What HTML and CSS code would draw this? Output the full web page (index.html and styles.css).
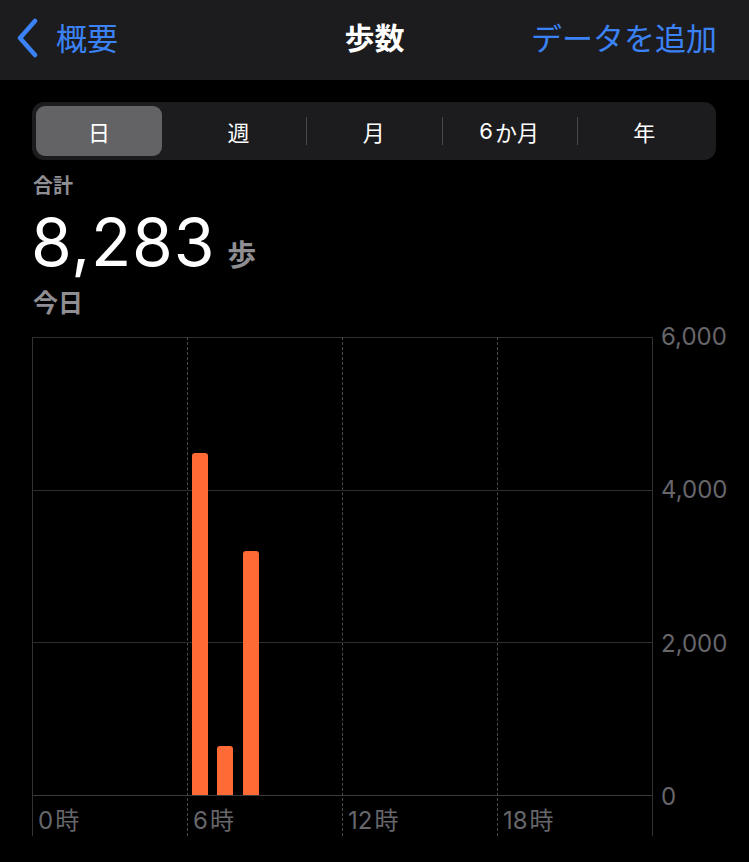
FILE: index.html
```html
<!DOCTYPE html>
<html lang="ja">
   <head>
      <meta charset="UTF-8">
      <meta name="viewport" content="width=device-width, initial-scale=1.0">
      <title>歩数</title>
      <link rel="stylesheet" href="styles.css">
   </head>
   <body>
      <header class="nav">
         <a class="nav-back">
            <svg width="26" height="40" viewBox="0 0 26 40"><path d="M21 3 L6 20 L21 37" fill="none" stroke="#3b82f6" stroke-width="4.5" stroke-linecap="round" stroke-linejoin="round"/></svg>
            <span>概要</span>
         </a>
         <div class="nav-title">歩数</div>
         <a class="nav-action">データを追加</a>
      </header>
      <div class="segments">
         <div class="segment active">日</div>
         <div class="segment">週</div>
         <div class="segment sep">月</div>
         <div class="segment sep">6<span class="kana">か月</span></div>
         <div class="segment sep">年</div>
      </div>
      <div class="summary">
         <div class="summary-label">合計</div>
         <div class="summary-value">8,283<span class="unit">歩</span></div>
         <div class="summary-date">今日</div>
      </div>
      <div class="chart">
         <div class="plot">
            <div class="quarter first">
               <div class="hours">
                  <div class="hour"></div><div class="hour"></div><div class="hour"></div>
                  <div class="hour"></div><div class="hour"></div><div class="hour"></div>
               </div>
               <div class="xlabel">0<span class="kana">時</span></div>
            </div>
            <div class="quarter">
               <div class="hours">
                  <div class="hour"><div class="bar" style="height: 342px"></div></div>
                  <div class="hour"><div class="bar" style="height: 49px"></div></div>
                  <div class="hour"><div class="bar" style="height: 244px"></div></div>
                  <div class="hour"></div><div class="hour"></div><div class="hour"></div>
               </div>
               <div class="xlabel">6<span class="kana">時</span></div>
            </div>
            <div class="quarter">
               <div class="hours">
                  <div class="hour"></div><div class="hour"></div><div class="hour"></div>
                  <div class="hour"></div><div class="hour"></div><div class="hour"></div>
               </div>
               <div class="xlabel">12<span class="kana">時</span></div>
            </div>
            <div class="quarter">
               <div class="hours">
                  <div class="hour"></div><div class="hour"></div><div class="hour"></div>
                  <div class="hour"></div><div class="hour"></div><div class="hour"></div>
               </div>
               <div class="xlabel">18<span class="kana">時</span></div>
            </div>
         </div>
         <div class="yaxis">
            <div class="ylabel">6,000</div>
            <div class="ylabel">4,000</div>
            <div class="ylabel">2,000</div>
            <div class="ylabel">0</div>
         </div>
      </div>
   </body>
</html>
```

FILE: styles.css
```css
* {
margin: 0;
padding: 0;
box-sizing: border-box;
}
body {
background: #000;
color: #fff;
font-family: "Inter", "Noto Sans CJK JP", sans-serif;
width: 749px;
height: 862px;
overflow: hidden;
}
.kana {
margin-left: 2px;
}
.nav {
display: grid;
grid-template-columns: 1fr auto 1fr;
align-items: center;
height: 80px;
background: #1c1c1e;
padding: 0 32px 8px 32px;
font-size: 31px;
font-family: "Noto Sans CJK JP", sans-serif;
}
.nav-back {
display: flex;
align-items: center;
gap: 16px;
margin-left: -18px;
color: #3b82f6;
}
.nav-back svg {
margin-top: 4px;
}
.nav-title {
font-size: 30px;
font-weight: 700;
}
.nav-action {
text-align: right;
color: #3b82f6;
}
.segments {
display: flex;
margin: 22px 33px 0 32px;
height: 58px;
padding: 4px;
background: #1c1c1e;
border-radius: 12px;
}
.segment {
flex: 1;
display: flex;
align-items: center;
justify-content: center;
font-size: 22px;
position: relative;
border-radius: 9px;
}
.segment.active {
background: #636366;
flex: 0 0 126px;
margin-right: 9px;
}
.segment.sep::before {
content: "";
position: absolute;
left: 0;
top: 11px;
bottom: 11px;
width: 1px;
background: #48484a;
}
.summary {
padding-left: 31px;
}
.summary-label {
margin-top: 12px;
padding-left: 2px;
font-size: 20px;
line-height: 26px;
font-weight: 700;
color: #8e8e93;
font-family: "Noto Sans CJK JP", sans-serif;
}
.summary-value {
margin-top: 11px;
font-size: 66px;
line-height: 66px;
font-weight: 400;
letter-spacing: 0.8px;
}
.unit {
margin-left: 12px;
font-size: 29px;
line-height: 0;
font-weight: 700;
color: #8e8e93;
letter-spacing: 0;
font-family: "Noto Sans CJK JP", sans-serif;
}
.summary-date {
margin-top: 11px;
padding-left: 2px;
font-size: 25px;
line-height: 30px;
font-weight: 700;
color: #8e8e93;
font-family: "Noto Sans CJK JP", sans-serif;
}
.chart {
display: flex;
margin: 21px 0 0 32px;
}
.plot {
display: flex;
width: 621px;
border-right: 1px solid #333336;
}
.quarter {
width: 155px;
border-left: 1px dashed #4a4a4d;
}
.quarter.first {
border-left: 1px solid #333336;
}
.hours {
display: flex;
height: 459px;
padding: 0 1px 0 0;
background-image: repeating-linear-gradient(to bottom, #2e2e30 0, #2e2e30 1px, transparent 1px, transparent 152.67px);
border-bottom: 1px solid #3a3a3c;
}
.hour {
flex: 1;
display: flex;
align-items: flex-end;
justify-content: center;
padding-right: 2px;
}
.bar {
width: 16px;
background: #ff6a35;
border-radius: 3px 3px 0 0;
}
.xlabel {
height: 40px;
padding: 10px 0 0 5px;
font-size: 24px;
line-height: 30px;
color: #66666b;
}
.yaxis {
display: flex;
flex-direction: column;
justify-content: space-between;
height: 488px;
margin-top: -14px;
padding-left: 8px;
}
.ylabel {
font-size: 24px;
line-height: 28px;
color: #66666b;
}
```
